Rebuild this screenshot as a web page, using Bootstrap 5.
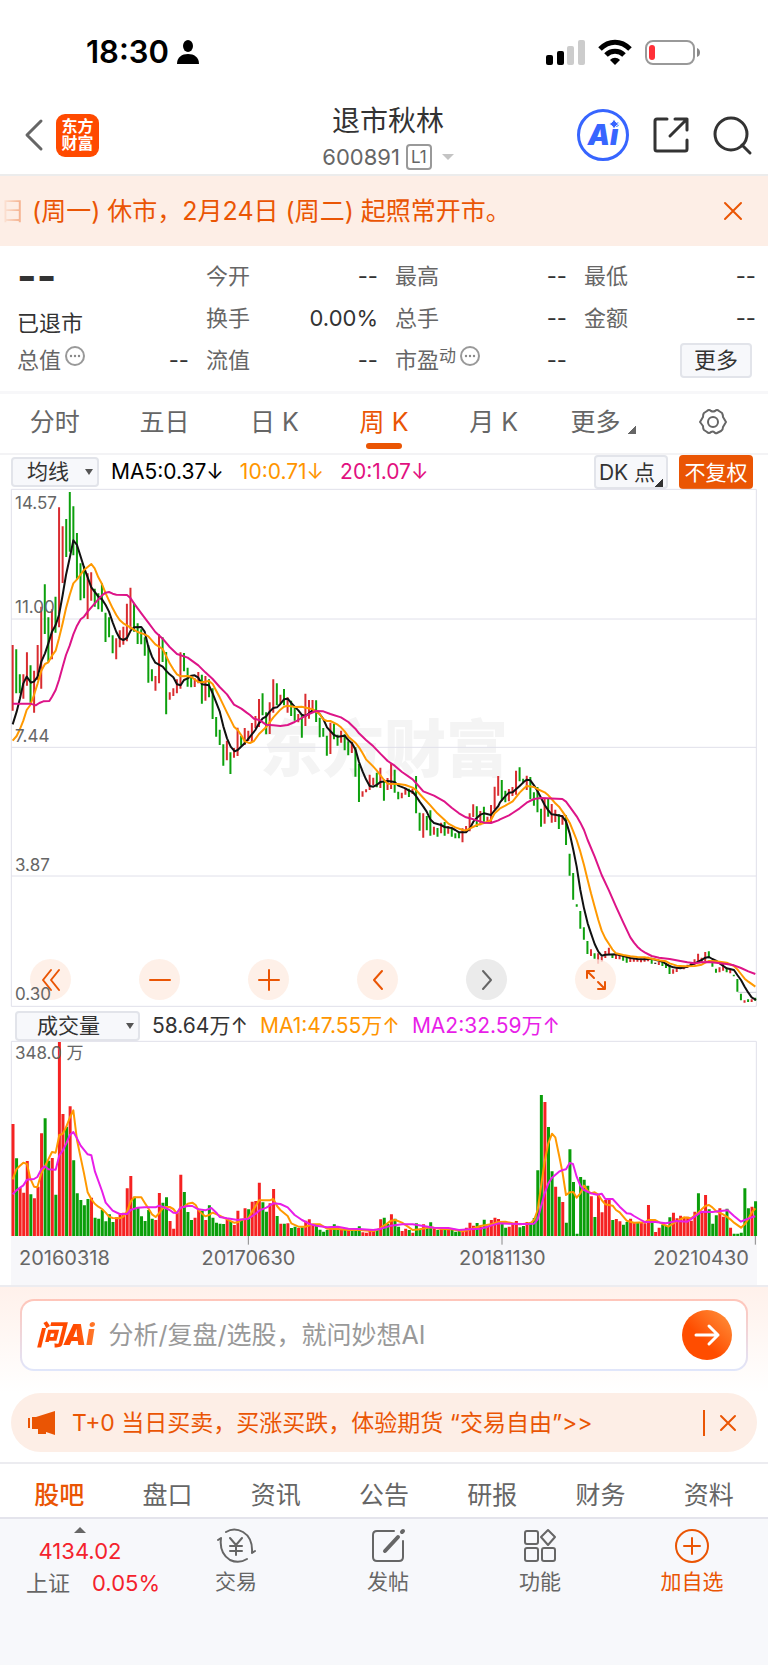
<!DOCTYPE html>
<html lang="zh-CN">
<head>
<meta charset="utf-8">
<meta name="viewport" content="width=device-width, initial-scale=1">
<title>退市秋林 600891</title>
<link rel="stylesheet" href="https://cdn.jsdelivr.net/npm/bootstrap@5.3.0/dist/css/bootstrap.min.css">
<style>
  :root { --brand: #ea5504; --ink: #333; --muted: #666; --line: #e6e6ee; --soft: #fdeee6; --panel: #f7f8fb; }
  body { font-family: Inter, "Noto Sans CJK SC", sans-serif; color: var(--ink); background: #fff; font-size: 22px; line-height: 32px; }
  button { font: inherit; color: inherit; background: none; border: 0; padding: 0; line-height: 1; }
  a { color: inherit; text-decoration: none; }
  svg { display: block; overflow: visible; flex: none; }
  .stroke-icon { fill: none; stroke: currentColor; stroke-width: 2; stroke-linecap: round; stroke-linejoin: round; }

  .status-row { height: 96px; padding: 8px 67px 0 86px; color: #000; }
  .status-icons { gap: 13px; }
  .clock { font-size: 31px; font-weight: 600; }
  .top-row { height: 80px; border-bottom: 2px solid #ececec; padding: 0 17px; }
  .side-group { flex: 1 1 0; }
  .back-group { gap: 13px; }
  .brand-tile { width: 43px; height: 43px; border-radius: 9px; background: #ff4a00; color: #fff; font-size: 16px; line-height: 17px; font-weight: 700; padding-top: 4px; }
  .stock-name { font-size: 28px; line-height: 36px; margin: 0; font-weight: 400; }
  .stock-code { font-size: 22px; line-height: 36px; color: var(--muted); gap: 6px; }
  .level-tag { border: 2px solid #999; border-radius: 4px; font-size: 17px; line-height: 22px; padding: 0 3px; }
  .caret-down { border: 6px solid transparent; border-top-color: #c4c4c4; border-bottom: 0; }
  .ai-ring { width: 52px; height: 52px; border: 3px solid #3765ff; border-radius: 50%; color: #3765ff; font-size: 28px; font-weight: 900; font-style: italic; }

  .news-bar { height: 70px; background: var(--soft); color: var(--brand); font-size: 25px; padding: 0 26px 0 0; }
  .fading { background: linear-gradient(90deg, #fdeee6, #f3a57c); -webkit-background-clip: text; background-clip: text; color: transparent; }

  .quote-grid { display: grid; grid-template-columns: repeat(4, minmax(0, 1fr)); grid-auto-rows: 42px; column-gap: 17px; padding: 9px 12px 10px 17px; border-bottom: 3px solid #f7f7f9; color: var(--muted); }
  .quote-grid b { font-weight: 400; color: var(--ink); }
  .last-price { font-size: 42px; font-weight: 700; color: var(--ink); }
  .raised { font-size: 17px; }
  .btn-soft { background: var(--panel); border: 2px solid #e2e4ea; border-radius: 4px; color: var(--ink); }
  .btn-more { width: 72px; height: 35px; }

  .period-tabs { height: 61px; color: var(--muted); font-size: 25px; border-bottom: 2px solid #f3f3f5; }
  .period-tabs > * { flex: 1 1 0; height: 100%; padding-bottom: 4px; }
  .period-tabs .current { color: var(--brand); }
  .period-tabs .current::after { content: ""; position: absolute; bottom: 4px; left: 50%; margin-left: -18px; width: 36px; height: 6px; border-radius: 3px; background: var(--brand); }
  .corner { width: 8px; height: 8px; background: linear-gradient(135deg, transparent 50%, currentColor 50%); }

  .legend-row { font-size: 21px; line-height: 30px; padding: 0 15px 0 11px; }
  .legend-row select { appearance: none; font-size: 21px; line-height: 26px; color: var(--ink); padding: 0 0 0 14px; height: 30px; width: 88px; }
  .legend-row .wide-select { width: 125px; padding-left: 20px; }
  .volume-legend { gap: 12px; padding-left: 15px; }
  .pick-arrow { position: absolute; right: 6px; top: 12px; border: 4px solid transparent; border-top: 6px solid #555; border-bottom: 0; pointer-events: none; }
  .adj-group { gap: 11px; }
  .adj-btn { width: 74px; height: 34px; font-size: 21px; white-space: nowrap; }
  .c-orange { color: #ff9500; } .c-pink { color: #e2107f; } .c-magenta { color: #e81ee8; }

  .plot { margin: 0 11px; position: relative; }
  .plot svg { width: 100%; }
  .plot button svg { width: auto; }
  .plot path { fill: none; vector-effect: non-scaling-stroke; }
  .plot-mark { position: absolute; left: 0; right: 0; color: #f4f4f4; font-size: 62px; line-height: 62px; font-weight: 900; text-align: center; z-index: -1; }
  .axis-label { position: absolute; left: 4px; font-size: 17px; line-height: 20px; color: var(--muted); }
  .chart-tools { position: absolute; left: 19px; bottom: 7px; gap: 68px; }
  .chart-tools button { width: 41px; height: 41px; border-radius: 50%; background: rgba(254,236,226,.8); color: var(--brand); }
  .chart-tools .next-tool { background: #ebebeb; color: #666; }
  .date-strip { margin: 0 11px; height: 49px; background: #f7f7fa; color: var(--muted); font-size: 20px; padding: 6px 8px; }
  .mid-date { margin: 0 16px 0 72px; }

  .ask-area { border-top: 2px solid #ececf0; background: linear-gradient(#fff1eb, #fff); padding: 12px 20px 22px; }
  .ask-box { height: 72px; border: 2px solid transparent; border-radius: 14px; padding: 0 14px; background: linear-gradient(#fff, #fff) padding-box, linear-gradient(#ffc5b9, #e0e6fb) border-box; }
  .ask-box input { border: 0; outline: 0; background: none; font-size: 25px; color: #333; min-width: 0; padding: 0; }
  .ask-box input::placeholder { color: #999; opacity: 1; }
  .ask-logo { font-size: 28px; font-weight: 900; font-style: italic; background: linear-gradient(90deg, #ff4a00 60%, #ff8a3c); -webkit-background-clip: text; background-clip: text; color: transparent; padding-right: 6px; }
  .ask-go { width: 50px; height: 50px; border-radius: 50%; background: linear-gradient(45deg, #ff4d00 40%, #ff9640); color: #fff; }
  .promo { margin: 0 11px; height: 59px; border-radius: 30px; background: var(--soft); color: var(--brand); padding: 0 22px 0 17px; font-size: 23px; }
  .promo-rule { width: 2px; height: 26px; background: var(--brand); }

  .info-tabs { margin-top: 10px; height: 55px; border-top: 2px solid #ececf0; padding: 15px 5px 0; font-size: 25px; color: var(--muted); }
  .info-tabs a { flex: 1 1 0; text-align: center; }
  .foot-bar { border-top: 2px solid #e4e4ec; background: var(--panel); color: var(--muted); padding-bottom: 69px; }
  .index-cell { width: 160px; font-size: 22px; line-height: 32px; }
  .index-line { padding-left: 26px; }
  .foot-bar .foot-item { flex: 1 1 0; font-size: 21px; line-height: 28px; padding-top: 9px; }
  .c-red { color: #f4222d; }
</style>
</head>
<body>
<header>
  <div class="status-row d-flex align-items-center justify-content-between">
    <div class="d-flex align-items-center gap-2">
      <span class="clock">18:30</span>
      <svg width="22" height="24" viewBox="0 0 22 24" fill="#000"><ellipse cx="11" cy="6" rx="5" ry="6"/><path d="M0 24c0-7 5-10 11-10s11 3 11 10z"/></svg>
    </div>
    <div class="status-icons d-flex align-items-center">
      <svg width="39" height="25" viewBox="0 0 39 25"><rect y="15" width="7" height="10" rx="2"/><rect x="11" y="11" width="7" height="14" rx="2"/><rect x="21" y="6" width="7" height="19" rx="2" fill="#ccc"/><rect x="32" width="7" height="25" rx="2" fill="#ccc"/></svg>
      <svg width="34" height="25" viewBox="0 0 34 25"><path fill="none" stroke="#000" stroke-width="5" d="M2 9C11 0 23 0 32 9M8 15c5-5 13-5 18 0"/><path d="M17 25l-5-5c3-3 7-3 10 0z"/></svg>
      <svg width="56" height="25" viewBox="0 0 56 25"><rect x="1" y="1" width="48" height="23" rx="7" fill="none" stroke="#999" stroke-width="2"/><rect x="4" y="5" width="6" height="15" rx="3" fill="#ff3038"/><path d="M52 8q3 1 3 4.500t-3 4.500z" fill="#888"/></svg>
    </div>
  </div>
  <div class="top-row d-flex align-items-center">
    <div class="side-group back-group d-flex align-items-center ps-2">
      <button type="button" aria-label="返回"><svg class="stroke-icon" width="18" height="30" viewBox="0 0 18 30" style="color:#666;stroke-width:3"><path d="M16 1L2 15l14 14"/></svg></button>
      <a href="#" class="brand-tile text-center">东方<br>财富</a>
    </div>
    <div class="text-center pt-2">
      <h1 class="stock-name">退市秋林</h1>
      <div class="stock-code d-flex align-items-center justify-content-center"><span>600891</span><span class="level-tag">L1</span><span class="caret-down ms-1"></span></div>
    </div>
    <div class="side-group d-flex align-items-center justify-content-end gap-4">
      <button type="button" class="ai-ring position-relative">Ai<svg class="position-absolute top-0 end-0 mt-2 me-2" width="8" height="8" viewBox="0 0 8 8" fill="#3765ff" stroke="#fff"><path d="M4-1l2 3 3 2-3 2-2 3-2-3-3-2 3-2z"/></svg></button>
      <button type="button" aria-label="分享"><svg class="stroke-icon" width="36" height="36" viewBox="0 0 36 36" style="stroke-width:3"><path d="M14 2H4Q2 2 2 4v28q0 2 2 2h28q2 0 2-2V23M22 2h12v11M34 2L17 19"/></svg></button>
      <button type="button" aria-label="搜索"><svg class="stroke-icon" width="38" height="38" viewBox="0 0 38 38" style="stroke-width:3"><circle cx="18" cy="18" r="16"/><path d="M29 29l8 8"/></svg></button>
    </div>
  </div>
</header>

<div class="news-bar d-flex align-items-center justify-content-between">
  <div class="text-nowrap"><span class="fading">日</span> (周一) 休市，2月24日 (周二) 起照常开市。</div>
  <button type="button" aria-label="关闭"><svg class="stroke-icon" width="18" height="18" viewBox="0 0 18 18"><path d="M1 1l16 16M17 1L1 17"/></svg></button>
</div>

<section class="quote-grid">
  <div class="last-price d-flex align-items-center">--</div>
  <div class="d-flex align-items-center justify-content-between">今开<b>--</b></div>
  <div class="d-flex align-items-center justify-content-between">最高<b>--</b></div>
  <div class="d-flex align-items-center justify-content-between">最低<b>--</b></div>
  <div class="d-flex align-items-end"><b>已退市</b></div>
  <div class="d-flex align-items-center justify-content-between">换手<b>0.00%</b></div>
  <div class="d-flex align-items-center justify-content-between">总手<b>--</b></div>
  <div class="d-flex align-items-center justify-content-between">金额<b>--</b></div>
  <div class="d-flex align-items-center">总值<svg class="ms-1 mb-2" width="20" height="20" viewBox="0 0 20 20" fill="#888"><circle cx="10" cy="10" r="9" fill="none" stroke="#999" stroke-width="2"/><circle cx="6" cy="10" r="1.200"/><circle cx="10" cy="10" r="1.200"/><circle cx="14" cy="10" r="1.200"/></svg><b class="ms-auto">--</b></div>
  <div class="d-flex align-items-center justify-content-between">流值<b>--</b></div>
  <div class="d-flex align-items-center">市盈<span class="raised mb-2 lh-1">动</span><svg class="ms-1 mb-2" width="20" height="20" viewBox="0 0 20 20" fill="#888"><circle cx="10" cy="10" r="9" fill="none" stroke="#999" stroke-width="2"/><circle cx="6" cy="10" r="1.200"/><circle cx="10" cy="10" r="1.200"/><circle cx="14" cy="10" r="1.200"/></svg><b class="ms-auto">--</b></div>
  <div class="d-flex align-items-center justify-content-end pe-1"><button type="button" class="btn-soft btn-more">更多</button></div>
</section>

<nav class="period-tabs d-flex">
  <a href="#" class="d-flex align-items-center justify-content-center">分时</a>
  <a href="#" class="d-flex align-items-center justify-content-center">五日</a>
  <a href="#" class="d-flex align-items-center justify-content-center">日 K</a>
  <a href="#" class="current position-relative d-flex align-items-center justify-content-center">周 K</a>
  <a href="#" class="d-flex align-items-center justify-content-center">月 K</a>
  <a href="#" class="d-flex align-items-center justify-content-center">更多<span class="corner ms-2 mt-3"></span></a>
  <button type="button" class="d-flex align-items-center justify-content-center" aria-label="设置"><svg class="stroke-icon" width="30" height="28" viewBox="0 0 30 28"><circle cx="15" cy="14" r="5"/><path d="M9 3q2-2 4 0 2 1 4 0 2-2 4 0l3 2q1 2 1 4l3 5-3 5q0 3-2 4l-4 2q-1 1-3-1-1-1-3 0-2 2-4 0l-3-2q-1-1-1-4l-3-4 3-5q0-3 1-4z"/></svg></button>
</nav>

<div class="legend-row d-flex align-items-center">
  <label class="position-relative"><select class="btn-soft" aria-label="主图指标"><option>均线</option></select><span class="pick-arrow"></span></label>
  <span class="ms-2 ps-1" style="color:#000">MA5:0.37↓</span>
  <span class="ms-3 c-orange">10:0.71↓</span>
  <span class="ms-3 c-pink">20:1.07↓</span>
  <div class="adj-group d-flex ms-auto">
    <button type="button" class="btn-soft adj-btn d-flex align-items-center justify-content-center">DK 点<span class="corner align-self-end"></span></button>
    <button type="button" class="adj-btn rounded-1 text-white" style="background:#ea5504">不复权</button>
  </div>
</div>

<div class="plot" id="price">
  <div class="plot-mark" style="top:230px">东方财富</div>
  <svg height="518" viewBox="0 0 2238 1554" preserveAspectRatio="none" id="priceSvg"></svg>
  <div class="chart-tools d-flex">
    <button type="button" class="d-flex align-items-center justify-content-center" aria-label="最早"><svg class="stroke-icon" width="18" height="26" viewBox="0 0 18 26"><path d="M9 3L1 13l8 10M17 3L9 13l8 10"/></svg></button>
    <button type="button" class="d-flex align-items-center justify-content-center" aria-label="缩小"><svg class="stroke-icon" width="20" height="20" viewBox="0 0 20 20"><path d="M0 10h20"/></svg></button>
    <button type="button" class="d-flex align-items-center justify-content-center" aria-label="放大"><svg class="stroke-icon" width="20" height="20" viewBox="0 0 20 20"><path d="M0 10h20M10 0v20"/></svg></button>
    <button type="button" class="d-flex align-items-center justify-content-center" aria-label="左移"><svg class="stroke-icon" width="10" height="18" viewBox="0 0 10 18"><path d="M9 0L1 9l8 9"/></svg></button>
    <button type="button" class="next-tool d-flex align-items-center justify-content-center" aria-label="右移"><svg class="stroke-icon" width="10" height="18" viewBox="0 0 10 18"><path d="M1 0l8 9-8 9"/></svg></button>
    <button type="button" class="d-flex align-items-center justify-content-center" aria-label="全屏"><svg class="stroke-icon" width="20" height="20" viewBox="0 0 20 20"><path d="M1 8V1h7M1 1l7 7M19 12v7h-7M19 19l-7-7"/></svg></button>
  </div>
  <span class="axis-label" style="top:4px">14.57</span>
  <span class="axis-label" style="top:108px">11.00</span>
  <span class="axis-label" style="top:237px">7.44</span>
  <span class="axis-label" style="top:366px">3.87</span>
  <span class="axis-label" style="top:495px">0.30</span>
</div>

<div class="legend-row volume-legend d-flex align-items-center mt-1">
  <label class="position-relative"><select class="btn-soft wide-select" aria-label="副图指标"><option>成交量</option></select><span class="pick-arrow"></span></label>
  <span>58.64万↑</span>
  <span class="c-orange">MA1:47.55万↑</span>
  <span class="c-magenta">MA2:32.59万↑</span>
</div>

<div class="plot">
  <svg height="195" viewBox="0 0 2238 585" preserveAspectRatio="none" id="volSvg"></svg>
  <span class="axis-label" style="top:2px">348.0 万</span>
</div>
<div class="date-strip d-flex justify-content-between"><span>20160318</span><span>20170630</span><span class="mid-date">20181130</span><span>20210430</span></div>

<div class="ask-area">
  <form class="ask-box d-flex align-items-center" onsubmit="return false">
    <span class="ask-logo">问Ai</span>
    <input class="flex-grow-1 ms-2" type="text" aria-label="提问" placeholder="分析/复盘/选股，就问妙想AI">
    <button type="submit" class="ask-go d-flex align-items-center justify-content-center" aria-label="发送"><svg class="stroke-icon" width="24" height="20" viewBox="0 0 24 20" style="stroke-width:3"><path d="M1 10h22M14 1l9 9-9 9"/></svg></button>
  </form>
</div>

<div class="promo d-flex align-items-center">
  <svg width="28" height="24" viewBox="0 0 28 24" fill="currentColor"><path d="M0 7h2v10H0zM4 6h4L27 0v24l-9-3v2h-8v-5H4z"/></svg>
  <a href="#" class="ms-3 me-auto text-nowrap">T+0 当日买卖，买涨买跌，体验期货 “交易自由”&gt;&gt;</a>
  <span class="promo-rule"></span>
  <button type="button" class="ms-3" aria-label="关闭"><svg class="stroke-icon" width="14" height="14" viewBox="0 0 14 14"><path d="M0 0l14 14M14 0L0 14"/></svg></button>
</div>

<nav class="info-tabs d-flex">
  <a href="#" class="fw-medium" style="color:#ea5504">股吧</a><a href="#">盘口</a><a href="#">资讯</a><a href="#">公告</a><a href="#">研报</a><a href="#">财务</a><a href="#">资料</a>
</nav>

<footer class="foot-bar d-flex">
  <a href="#" class="index-cell text-center position-relative pt-3">
    <svg class="position-absolute start-50 translate-middle-x top-0 mt-2" width="12" height="6" viewBox="0 0 12 6" fill="#666"><path d="M6 0l6 6H0z"/></svg>
    <span class="c-red d-block">4134.02</span>
    <span class="index-line d-flex justify-content-between text-nowrap">上证<span class="c-red">0.05%</span></span>
  </a>
  <button type="button" class="foot-item d-flex flex-column align-items-center gap-1"><svg class="stroke-icon" width="38" height="36" viewBox="0 0 38 36"><path d="M9 4Q17-1 26 4q10 6 9 21l3-2M30 31q-8 5-17 1Q2 25 4 10L1 12M13 10l6 7 6-7M13 18h12M13 23h12M19 17v10"/></svg>交易</button>
  <button type="button" class="foot-item d-flex flex-column align-items-center gap-1"><svg class="stroke-icon" width="34" height="36" viewBox="0 0 34 36"><path d="M23 3H6Q2 3 2 7v22q0 4 4 4h22q4 0 4-4V13"/><path d="M14 23l13-14M31 4l1-1" stroke-width="4"/></svg>发帖</button>
  <button type="button" class="foot-item d-flex flex-column align-items-center gap-1"><svg class="stroke-icon" width="32" height="36" viewBox="0 0 32 36"><rect x="1" y="3" width="13" height="13" rx="2"/><rect x="1" y="20" width="13" height="13" rx="2"/><rect x="18" y="20" width="13" height="13" rx="2"/><path d="M24 2l7 7-7 8-7-8z"/></svg>功能</button>
  <button type="button" class="foot-item d-flex flex-column align-items-center gap-1" style="color:#ea5504"><svg class="stroke-icon" width="34" height="36" viewBox="0 0 34 36"><circle cx="17" cy="18" r="16"/><path d="M9 18h16M17 10v16"/></svg>加自选</button>
</footer>

<script>
// Weekly bars in three runs; every bar is colour, high and low, measured from the top of its run.
const STEP = 10.71, FIRST = 5;
const priceRuns = [
  { dy: -27, bars: "r495-692 g508-640 g583-640 r583-656 r517-617 g556-668 r572-698 r495-600 r380-626 g313-462 g412-545 r388-538 g350-458 r82-442 r139-309 g117-231 g36-215 g79-226 g159-296 g250-361 g258-355 r280-417 r277-362 g326-380 g340-388 g310-395 g398-486 g412-472 g466-520 r475-538 r451-502 r440-494 r371-484 r323-448 g368-455 g430-492 g448-493 g472-527 g495-608 g568-604 r588-632 r463-610 g472-546 g516-703 r637-659 r625-648 r598-640 r517-626 g519-574 g563-620 g590-622 r595-621 r576-610 g584-671 r588-662 g598-652 g625-717 g711-770 g749-795 g793-857 r782-841 g817-882 r804-833 r743-828 g768-797 r744-795 r752-783 r729-786 r708-745 r657-741" },
  { dy: 453, bars: "g160-226 g217-283 r187-282 r118-218 g130-196 r164-190 g147-196 r172-218 g182-228 g198-242 r222-247 g222-293 r161-258 r180-236 r180-218 g181-246 g233-292 g264-290 g287-347 r248-342 g251-298 g284-317 r272-308 g283-331 g304-346 r306-339 g322-410 g371-486 r454-470 r448-457 r404-450 r413-436 g398-442 r383-444 g418-482 r414-450 r372-447 g389-458 g455-478 r458-475 r447-464 g446-471 r446-462 g408-520 g518-572 r520-593 g528-571 g511-587 r560-584 g564-590 r548-580 g546-587 r558-581 g566-590 g580-595 g578-595 r565-607 r558-578 r520-574 r493-531 g499-561 r513-556 g500-545 r530-548 r495-547 r440-508 r408-467 g420-482 g452-487 r447-484 r441-468 r392-464" },
  { dy: 753, bars: "g82-124 g116-130 r107-150 g111-178 g157-197 g141-217 g206-260 r173-251 g175-230 r192-248 r209-246 g222-267 r225-254 g226-315 g341-407 g399-479 g493-500 g513-566 g562-599 g603-642 r628-648 g640-656 r640-671 r650-665 r633-654 r623-645 g642-654 r645-657 r645-658 g648-662 g654-668 r655-666 r655-665 r656-665 r656-667 r655-665 r650-664 g657-671 k668-672 r666-675 g664-678 g668-684 g675-702 r688-701 r683-696 r678-686 r677-688 r674-684 r668-679 r658-676 r641-667 r653-667 r636-664 g634-655 g662-680 g686-698 r682-697 r672-692 g685-697 r690-700 g704-709 g717-755 g761-781 r781-788 g778-786 r778-786 g773-782" }
];
const volumeTops = "r282 g385 r474 r488 r393 g493 r505 r470 r310 g265 g392 r384 g494 r36 r252 g290 r229 g391 g490 g510 g526 g507 r503 g563 g566 g539 g574 g553 g576 r562 r553 r548 r475 r438 g500 g533 g559 g573 g540 g566 r570 r489 g518 g502 r573 r596 r549 r434 g486 g546 g570 r563 r540 g542 r570 g526 g563 g578 g581 g582 r570 g573 r585 r542 g566 r535 g538 r515 r513 r458 g517 g545 r520 r477 g558 r581 g581 r580 g594 g590 r594 g592 r572 r568 r583 g588 g599 g605 g600 r590 g583 g595 r596 g594 r598 g600 g596 g589 r607 r608 r602 r603 g598 r568 g563 g582 r553 g566 g590 r603 r596 g600 r608 g580 g596 r583 g592 g577 r592 g600 r592 g596 r594 g600 g605 g602 r602 r593 r578 r587 g579 r590 g569 r590 r570 r563 r567 g575 g593 r590 r582 r573 g592 g588 r576 g577 g564 g421 g195 r216 g291 g424 r470 g500 r516 g578 g358 g456 g611 g441 g449 g467 r499 g561 r494 r547 r510 r508 g570 r567 r574 g584 g576 r566 r578 g579 r577 r580 r525 g568 r606 r593 g584 g588 g562 r548 r565 r557 r563 r560 r572 r545 g490 r548 r495 g538 g581 g556 r535 r560 g536 r593 g611 g611 g608 g475 g535 r530 g514";

const priceLines = [
  ["#111", [
    [-33, -27, "38,733 50,695 60,655 70,610 80,590 86,598 93,608 102,605 113,590 124,545 135,520 145,490 156,455 167,435 177,405 188,345 198,285 209,235 220,181 231,195 252,262 274,322 295,350 306,358 317,375 327,395 338,427 349,456 359,475 370,480 381,474 392,452 402,442 424,441 434,455 445,500 456,530 466,548 488,560 498,572 509,583 520,592 531,613 542,616 552,600 563,595 574,587 584,586 595,593 606,613 627,616 638,640 659,694 670,739 681,775 692,800 704,814 713,810 734,790"],
    [717, 453, "5,284 16,270 27,250 38,235 48,230 59,215 70,204 81,202 91,192 102,178 113,176 123,188 134,200 145,211 155,224 166,228 177,220 188,211 198,213 209,222 220,237 231,262 241,273 252,285 263,290 284,287 295,300 306,310 317,330 327,366 338,395 348,418 359,438 370,440 380,435 391,426 413,423 434,426 445,437 466,445 477,452 488,456 498,468 509,485 520,500 530,515 541,538 552,549 573,555 584,561 605,564 616,570 627,577 648,577 659,566 670,545 681,533 691,524 702,520 723,525 734,511 745,498"],
    [1467, 753, "0,187 12,173 27,158 38,157 48,148 59,138 70,127 80,119 91,121 102,136 112,152 123,173 134,195 145,211 155,223 166,224 187,229 198,244 209,280 220,330 230,380 241,450 252,505 263,550 273,580 284,612 295,635 305,647 316,644 348,643 370,648 391,654 412,657 434,658 455,656 477,662 488,665 498,672 509,678 520,682 541,685 562,680 573,675 584,670 595,665 605,660 616,653 627,651 637,657 648,662 659,670 670,678 680,685 702,690 712,705 723,720 734,740 745,758 755,772 768,780"]]],
  ["#ff9900", [
    [-33, -27, "38,782 50,768 60,747 70,722 80,690 91,675 102,645 113,610 124,572 135,552 145,547 156,527 167,512 177,475 188,430 198,385 209,345 220,310 231,298 252,270 274,252 284,265 295,292 306,312 317,340 327,362 338,385 349,405 359,420 370,430 392,443 413,456 434,463 445,469 466,493 488,507 498,527 509,550 520,568 531,583 542,589 563,588 574,591 595,606 606,607 627,603 638,612 659,652 681,698 702,740 713,750 724,766 734,784 745,788"],
    [717, 453, "0,309 12,303 27,282 48,262 70,232 91,209 102,200 113,197 134,201 155,200 188,208 198,215 209,222 220,238 231,243 241,243 263,254 273,262 284,274 295,290 317,309 327,322 338,340 348,358 370,380 380,391 402,420 413,431 445,432 466,435 488,443 498,450 520,474 541,496 562,520 584,540 595,551 616,562 638,570 648,571 659,566 681,555 702,549 713,545 723,540 734,520 745,510"],
    [1467, 753, "0,205 16,197 38,184 59,158 70,147 80,138 102,141 112,147 134,157 145,166 155,177 166,190 177,200 198,230 209,248 220,275 230,300 241,335 252,375 263,420 273,460 284,500 295,540 305,572 316,595 327,612 337,628 348,640 370,645 391,649 412,651 434,652 455,656 477,661 498,664 509,670 530,677 552,679 584,678 605,674 616,668 627,663 648,664 680,668 702,678 712,688 723,702 734,716 745,725 766,740"]]],
  ["#dd1488", [
    [-33, -27, "38,671 91,671 107,676 118,669 130,664 148,663 156,650 167,630 177,600 188,560 198,525 209,497 220,463 231,437 242,418 252,410 263,395 274,382 295,358 306,346 317,338 327,336 338,341 349,344 381,345 392,355 402,370 424,400 445,428 466,456 488,476 509,501 531,522 563,533 595,556 616,577 638,597 659,621 681,643 702,674 724,686 740,698"],
    [717, 453, "0,225 12,236 30,241 48,254 70,256 91,258 113,255 134,246 155,234 177,222 198,213 220,214 241,222 273,232 295,246 316,266 327,280 348,300 370,319 391,341 413,363 434,377 456,396 488,418 498,429 520,454 552,467 584,485 605,503 627,520 648,532 670,538 702,548 723,549 745,541"],
    [1467, 753, "0,238 27,226 38,219 59,205 80,188 102,177 123,174 187,177 198,185 209,200 230,229 241,248 252,270 263,300 284,350 305,405 327,452 348,500 370,548 391,592 402,608 412,620 423,630 434,637 455,648 477,653 509,657 541,663 562,667 584,670 605,667 627,666 648,668 680,672 702,676 723,684 745,694 766,702"]]]
];
const volumeLines = [
  ["#ff9900", [
    [-33, -33, "38,448 49,418 59,408 70,398 81,402 91,446 102,470 112,472 124,430 134,411 145,388 156,366 167,368 178,315 188,312 199,290 209,264 220,241 231,330 242,383 252,430 263,487 274,508 285,522 295,530 306,537 317,548 327,560 338,564 359,565 370,560 381,545 392,515 402,502 424,502 434,518 445,535 456,553 467,561 477,550 488,535 498,531 509,531 520,537 531,550 541,533 552,530 563,521 577,518 587,525 595,540 606,551 616,559 627,555 638,548 659,557 681,568 702,578 713,577 724,570 745,565 756,545 766,530 777,511 809,511 820,507 831,528 841,540 863,558 874,580 895,590 917,590 938,583 960,583 981,596 1013,597 1045,600 1077,600 1120,603 1131,600"],
    [1107, -33, "0,595 22,580 33,572 46,570 66,578 87,592 98,600 119,598 151,592 183,597 216,598 248,604 269,599 301,588 333,583 355,576 376,575 398,580 419,583 451,580 462,570 473,540 483,470 494,395 505,340 516,311 526,322 537,375 548,430 558,495 569,487 580,486 590,503 601,490 612,467 622,482 633,490 644,487 655,494 665,510 676,523 698,527 708,540 719,547 740,572 762,578 794,577 805,570 826,570 847,582 865,590 880,580 912,562 933,565 955,548 965,538 976,528 987,525 997,532 1008,543 1029,553 1040,560 1051,568 1062,578 1083,593 1094,583 1104,568 1115,548 1126,535"]]],
  ["#e81ee8", [
    [-33, -33, "38,493 49,481 70,466 81,449 102,447 112,441 124,418 134,409 145,418 167,419 178,376 188,362 199,340 209,316 220,306 231,325 242,347 263,373 274,376 285,425 306,483 317,518 338,542 359,552 381,552 392,540 413,533 434,532 467,532 477,527 488,530 509,540 520,548 531,549 541,533 563,528 577,528 595,538 616,541 634,534 649,548 659,561 681,565 713,570 745,566 766,552 777,542 799,533 820,520 841,522 863,532 884,555 906,570 927,581 949,587 981,592 1013,590 1045,596 1077,597 1120,600"],
    [1107, -33, "0,597 33,587 66,583 98,583 130,588 162,593 205,594 237,600 269,598 301,596 323,590 355,580 387,581 430,582 462,581 473,568 483,530 494,490 505,460 516,443 537,425 548,420 558,418 569,399 579,402 590,440 601,467 612,480 633,490 651,494 665,491 676,507 698,507 719,530 740,550 751,551 762,558 783,570 794,576 826,576 858,580 890,573 922,575 944,560 965,545 997,546 1029,542 1043,541 1062,558 1083,575 1094,570 1115,562 1126,559"]]]
];
const paint = { r: "#d92c30", g: "#0da00d", k: "#333" };
const volPaint = { r: "#f52222", g: "#0a9e0a" };
const path = (d, color, width) => `<path d="${d}" stroke="${color}" stroke-width="${width}" stroke-linejoin="round"/>`;
const curve = ([color, runs]) => path("M" + runs.map(([dx, dy, pts]) =>
  pts.split(" ").map(p => { const [x, y] = p.split(",").map(Number); return (x + dx) + " " + (y + dy); }).join("L")).join("L"), color, 2);

let i = 0;
const candles = { r: "", g: "", k: "" };
priceRuns.forEach(run => run.bars.split(" ").forEach(bar => {
  const [hi, lo] = bar.slice(1).split("-").map(Number);
  candles[bar[0]] += `M${(FIRST + i++ * STEP).toFixed(1)} ${hi + run.dy}V${lo + run.dy}`;
}));
document.getElementById("priceSvg").innerHTML =
  path("M1 1H2236V1552H1ZM1 390H2236M1 775H2236M1 1161H2236", "#e0e0ea", 1) +
  path("M2180 1510H2236", "#ccccd6", 1) +
  Object.keys(candles).map(k => path(candles[k], paint[k], 2)).join("") +
  priceLines.map(curve).join("");

const bars = { r: "", g: "" };
volumeTops.split(" ").forEach((bar, n) => {
  bars[bar[0]] += `M${(FIRST + 1 + n * STEP).toFixed(1)} ${bar.slice(1) - 33}V585`;
});
document.getElementById("volSvg").innerHTML =
  path("M1 585V1H2236V585", "#e0e0ea", 1) +
  Object.keys(bars).map(k => path(bars[k], volPaint[k], 3)).join("") +
  volumeLines.map(curve).join("") +
  path("M712 585V611M1473 585V611M2233 585V611", "#888", 1);
</script>
<script src="https://cdn.jsdelivr.net/npm/bootstrap@5.3.0/dist/js/bootstrap.bundle.min.js"></script>
</body>
</html>
